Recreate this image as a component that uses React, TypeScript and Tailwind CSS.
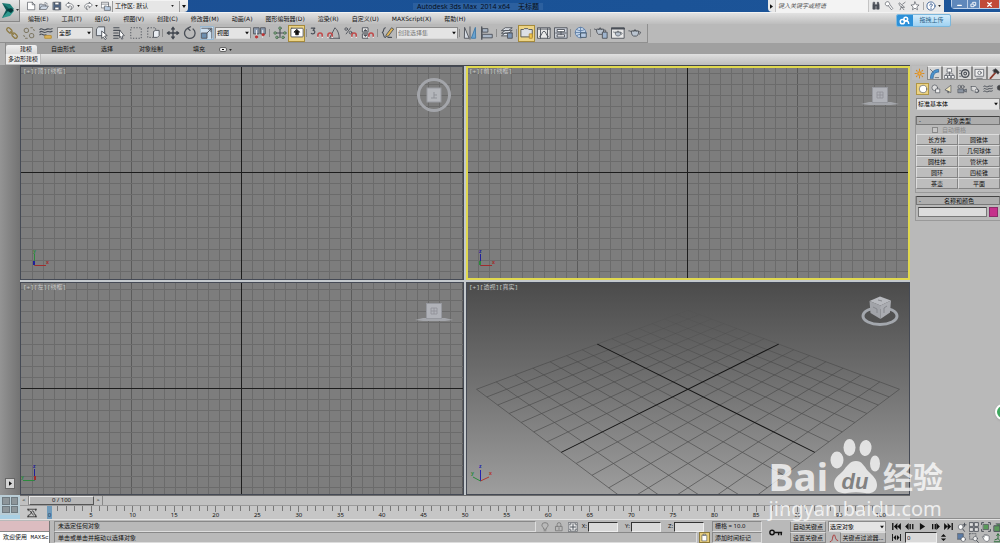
import type { ReactNode } from 'react';
import { useState } from 'react';

const MENUS = [
  '编辑(E)',
  '工具(T)',
  '组(G)',
  '视图(V)',
  '创建(C)',
  '修改器(M)',
  '动画(A)',
  '图形编辑器(D)',
  '渲染(R)',
  '自定义(U)',
  'MAXScript(X)',
  '帮助(H)',
];

const OBJECT_TYPES = ['长方体', '圆锥体', '球体', '几何球体', '圆柱体', '管状体', '圆环', '四棱锥', '茶壶', '平面'];

const FRAMES = Array.from({ length: 101 }, (_, i) => i);

/* ---------- small shared pieces ---------- */

interface GlyphProps {
  children: ReactNode;
  className?: string;
}

function Glyph({ children, className = 'h-[14px] w-[14px]' }: GlyphProps) {
  return (
    <svg
      viewBox="0 0 16 16"
      className={`block shrink-0 ${className}`}
      fill="none"
      stroke="#4a4f57"
      strokeWidth={1}
      strokeLinecap="round"
      strokeLinejoin="round"
    >
      {children}
    </svg>
  );
}

interface ToolProps {
  label: string;
  children: ReactNode;
  active?: boolean;
}

function Tool({ label, children, active = false }: ToolProps) {
  return (
    <button
      type="button"
      aria-label={label}
      className={`flex h-[17px] w-[17px] shrink-0 items-center justify-center ${
        active ? 'border border-[#a58a3c] bg-[#ecd384]' : ''
      }`}
    >
      <Glyph>{children}</Glyph>
    </button>
  );
}

function Divider() {
  return (
    <span className="flex w-[3px] shrink-0 justify-center">
      <span className="h-2 w-px bg-[#8c8c8c]" />
    </span>
  );
}

interface DropProps {
  label: string;
  value: string;
  className: string;
  muted?: boolean;
}

function Drop({ label, value, className, muted = false }: DropProps) {
  return (
    <span className={`relative block shrink-0 ${className}`}>
      <select
        aria-label={label}
        className={`block h-full w-full appearance-none truncate border border-[#8a8a8a] border-b-[#d8d8d8] bg-[#e4e4e4] pl-px text-[6px] leading-none ${
          muted ? 'text-[#777]' : 'text-black'
        }`}
      >
        <option>{value}</option>
      </select>
      <svg viewBox="0 0 4 3" className="pointer-events-none absolute top-1/2 right-[2px] h-[3px] w-1 -translate-y-1/2">
        <path d="M0 0h4L2 3z" fill="#111" />
      </svg>
    </span>
  );
}

function Magnet({ x = 7, y = 8 }: { x?: number; y?: number }) {
  return (
    <g transform={`translate(${x} ${y})`}>
      <path d="M1 6V3.500a2.500 2.500 0 0 1 5 0V6" stroke="#c04a4a" strokeWidth="1.800" strokeLinecap="butt" />
      <path d="M.2 6h1.600M5.200 6h1.600" stroke="#eee" strokeWidth="1.400" strokeLinecap="butt" />
    </g>
  );
}

function Teapot() {
  return (
    <>
      <path d="M4 7c-.5 2 .5 4.500 2 5.500h4c1.500-1 2.500-3.500 2-5.500z" fill="#b9c3cf" />
      <path d="M4 8C2.500 6.500 2 6.500 1 6.500M12 8c2.500-1.500 3.500.5 1 2.500M6 7c.5-1.500 3.500-1.500 4 0M8 5v.6" />
    </>
  );
}

/* ---------- title bar ---------- */

function AppLogo() {
  return (
    <svg viewBox="0 0 20 22" className="h-[22px] w-5">
      <path d="M2 3l8 1 4 5-5 1z" fill="#1f7f78" />
      <path d="M2 3l4 7-4 8 6-3 3-5z" fill="#0e5a58" />
      <path d="M2 18l8-2 4-5-5-1z" fill="#2f9a8f" />
      <path d="M6 10l5-2 3 2-3 3z" fill="#06393b" />
      <path d="M16 9h3l-1.500 2z" fill="#333" />
    </svg>
  );
}

function TitleBar() {
  return (
    <header className="flex h-3 shrink-0 bg-linear-to-r from-[#1c4f94] via-[#1a5296] to-[#1d5599]">
      <div className="flex shrink-0 items-center rounded-br-sm bg-linear-to-b from-[#f4f4f4] to-[#dcdcdc] pl-6">
        <QuickButton label="新建">
          <path d="M3 2h7l4 4v8H3zM10 2v4h4" fill="#fff" />
        </QuickButton>
        <QuickButton label="打开">
          <path d="M1 13V5h4l1 1h5v2M1 13l3-5h11l-3 5zM9 3c2-1 4 0 4 2" fill="#cfd9e6" />
        </QuickButton>
        <QuickButton label="保存">
          <path d="M2 2h12v12H2z" fill="#516786" />
          <path d="M5 2h6v4H5zM5 10h6v4H5z" fill="#fff" />
        </QuickButton>
        <QuickButton label="撤消">
          <path d="M6 2L1 6.500 6 11V8c5-1 6 1 3 6 7-4 5-10-3-10z" fill="#fff" />
        </QuickButton>
        <Caret />
        <QuickButton label="重做">
          <path d="M10 2l5 4.500-5 4.500V8C5 7 4 9 7 14 0 10 2 4 10 4z" fill="#fff" />
        </QuickButton>
        <Caret />
        <QuickButton label="项目文件夹">
          <path d="M1 2h11v9H1zM1 5h11" fill="#fff" />
          <path d="M6 8h3l1 1h5v6H6z" fill="#b9cbe0" />
        </QuickButton>
        <button
          type="button"
          className="flex h-[11px] w-[68px] items-center justify-between border-x border-[#9b9b9b] bg-[#e6e6e6] pr-1 pl-[2px] text-[6px] leading-none"
        >
          <span>工作区: 默认</span>
          <Caret />
        </button>
        <button type="button" aria-label="自定义快速访问工具栏" className="flex h-full w-2 items-center justify-center">
          <svg viewBox="0 0 4 3" className="h-[3px] w-1">
            <path d="M0 0h4L2 3z" fill="#111" />
          </svg>
        </button>
      </div>

      <h1 className="flex flex-1 items-center justify-center font-['Open_Sans','Noto_Sans_CJK_SC',sans-serif] text-[7px] leading-none whitespace-nowrap text-[#050b16]">
        <span className="flex gap-2 bg-[#3d6ea8]/50 px-1">
          <span>Autodesk 3ds Max&nbsp; 2014 x64</span>
          <span>无标题</span>
        </span>
      </h1>

      <div className="flex w-[176px] shrink-0 items-center rounded-bl-sm bg-[#e9e9e9]">
        <svg viewBox="0 0 4 6" className="mx-[2px] h-[5px] w-[3px]">
          <path d="M0 0v6l4-3z" fill="#111" />
        </svg>
        <input
          type="text"
          aria-label="搜索"
          placeholder="键入关键字或短语"
          className="h-full w-[94px] border-x border-[#c4c4c4] bg-[#f3f3f3] pl-[2px] text-[6px] leading-none italic placeholder:text-[#555]"
        />
        <QuickButton label="查找">
          <path d="M3 6v7h4V8h2v5h4V6l-1-4h-2v4H6V2H4z" fill="#4a4f57" />
        </QuickButton>
        <QuickButton label="密钥">
          <path d="M8 7a3.500 3.500 0 1 1 1-2L14 12l-2 2-5-6.500" fill="#fff" />
        </QuickButton>
        <QuickButton label="通讯中心">
          <path d="M3 4c2 6 5 7 9 6M4 3l7 6M9 5l4-3M5 14l2-5 4 5" />
        </QuickButton>
        <QuickButton label="收藏夹">
          <path d="M8 1.500l2 4.500 4.500.4L11 9.500l1 4.500-4-2.500L4 14l1-4.500L1.500 6.400 6 6z" fill="#fff" />
        </QuickButton>
        <span className="ml-[2px] h-2 w-px bg-[#aaa]" />
        <QuickButton label="帮助">
          <circle cx="8" cy="8" r="6.500" fill="#fff" stroke="#3a5f94" strokeWidth="1.400" />
          <path d="M6 6.500C6 4 10 4 10 6.500c0 1.500-2 1.500-2 3M8 11.500v.3" stroke="#234a86" strokeWidth="1.600" />
        </QuickButton>
        <Caret />
      </div>

      <div className="flex w-14 shrink-0 items-start justify-end">
        <div className="flex h-[9px] w-[49px] rounded-bl-sm border border-t-0 border-[#bcd0e8] text-white">
          <WindowButton label="最小化" className="w-[15px] bg-[#5f88bb]">
            <path d="M4 10h8" stroke="#fff" strokeWidth="3" />
          </WindowButton>
          <WindowButton label="还原" className="w-[13px] border-x border-[#bcd0e8] bg-[#5f88bb]">
            <path d="M3 7h6v6H3zM6 5V3h7v7h-3" stroke="#fff" strokeWidth="2" />
          </WindowButton>
          <WindowButton label="关闭" className="flex-1 bg-[#c14a38]">
            <path d="M4 4l8 8M12 4l-8 8" stroke="#fff" strokeWidth="3" />
          </WindowButton>
        </div>
      </div>
    </header>
  );
}

function QuickButton({ label, children }: { label: string; children: ReactNode }) {
  return (
    <button type="button" aria-label={label} className="flex h-full w-[13px] items-center justify-center">
      <Glyph className="h-[10px] w-[10px]">{children}</Glyph>
    </button>
  );
}

function WindowButton({ label, className, children }: { label: string; className: string; children: ReactNode }) {
  return (
    <button type="button" aria-label={label} className={`flex items-center justify-center ${className}`}>
      <Glyph className="h-[7px] w-[7px]">{children}</Glyph>
    </button>
  );
}

function Caret() {
  return (
    <svg viewBox="0 0 4 3" className="mx-px h-[2px] w-[3px] shrink-0">
      <path d="M0 0h4L2 3z" fill="#222" />
    </svg>
  );
}

/* ---------- menu, toolbar, ribbon ---------- */

function MenuBar() {
  return (
    <nav className="flex h-3 shrink-0 items-center gap-[13px] border-t border-[#f2f2f2] bg-linear-to-b from-[#e2e2e2] to-[#bdbdbd] pl-7 font-['DejaVu_Sans','Noto_Sans_CJK_SC',sans-serif]">
      {MENUS.map((m) => (
        <button key={m} type="button" className="whitespace-nowrap">
          {m}
        </button>
      ))}
    </nav>
  );
}

function Toolbar() {
  return (
    <div className="flex h-[19px] shrink-0 bg-[#b9b9b9]">
      <div className="flex items-center border-r border-b border-[#8f8f8f] pr-1 pl-[3px]">
        <Tool label="选择并链接">
          <g stroke="#8e7b45" strokeWidth="1.500">
            <rect x="1.500" y="3" width="7" height="4" rx="2" transform="rotate(45 5 5)" />
            <rect x="7.500" y="9" width="7" height="4" rx="2" transform="rotate(45 11 11)" />
            <path d="M6.500 6.500l3 3" />
          </g>
        </Tool>
        <Tool label="断开当前选择链接">
          <g stroke="#7d7763" strokeWidth="1.200">
            <path d="M10 2h2M13 4l1 1M2 11l1 1M4 14h2" />
            <circle cx="5" cy="5" r="2.500" strokeDasharray="2 1" />
            <circle cx="11" cy="11" r="2.500" strokeDasharray="2 1" />
          </g>
        </Tool>
        <Tool label="绑定到空间扭曲">
          <path d="M1 4c2-3 4 2 7 0s4 1 7-1M1 7c2-3 4 2 7 0s4 1 7-1M1 10c2-3 4 2 7 0" strokeWidth="1.300" />
          <path d="M7 11h7v3H7z" fill="#dfb75a" stroke="#b38a31" />
        </Tool>
        <Drop label="选择过滤器" value="全部" className="ml-[3px] h-3 w-9" />
        <Tool label="选择对象">
          <path d="M2 3l2-2h7v8l-2 2H2z" fill="#dfe5ec" />
          <path d="M8 6l6 5-3 .5 2 3-1.500 1-2-3L8 14z" fill="#fff" />
        </Tool>
        <Tool label="按名称选择">
          <path d="M2 2h6M2 5h7M2 8h5M2 11h6M2 14h5" strokeWidth="1.400" />
          <path d="M9 5l5 6-2.500.5 1 3-1.500.5-1-3-1 1z" fill="#fff" />
        </Tool>
        <Tool label="矩形选择区域">
          <path d="M2 2h12v12H2z" strokeDasharray="1.500 1.700" strokeLinecap="butt" />
        </Tool>
        <Tool label="窗口/交叉">
          <path d="M2 2h9v11H2z" strokeDasharray="1.500 1.700" strokeLinecap="butt" />
          <path d="M9 6l2-1h4v6l-2 2H9z" fill="#e9edf2" />
        </Tool>
        <Divider />
        <Tool label="选择并移动">
          <g strokeWidth="1.500" stroke="#3f444c">
            <path d="M8 2v12M2 8h12M6.500 3.500L8 1.500l1.500 2M6.500 12.500l1.500 2 1.500-2M3.500 6.500L1.500 8l2 1.500M12.500 6.500l2 1.500-2 1.500" />
          </g>
        </Tool>
        <Tool label="选择并旋转">
          <path d="M11.500 3.500A6 6 0 1 1 6 2.500M8.500.8L5.500 2.500l2.500 2.500" strokeWidth="1.500" />
        </Tool>
        <Tool label="选择并均匀缩放">
          <path d="M.5.5h15v15H.5z" fill="#cfe0ef" stroke="#8fb2cf" />
          <path d="M2 8h6v6H2z" fill="#6c8fb0" />
          <path d="M2 2.500h11.500V14M8 8l4.500-4.500M9.500 3.500h3v3" />
        </Tool>
        <Drop label="参考坐标系" value="视图" className="h-3 w-9" />
        <Tool label="使用轴点中心">
          <path d="M1 2h6v7H1zM9 2h5v7H9z" fill="#8d9cb0" />
          <path d="M4 5v8M11 5v8" stroke="#eee" />
          <circle cx="4" cy="12.500" r="1.300" fill="#b33" stroke="#b33" />
          <circle cx="11.500" cy="10" r="1.300" fill="#b33" stroke="#b33" />
        </Tool>
        <Divider />
        <Tool label="选择并操纵">
          <path d="M8 3v10M3 8h10" strokeWidth="1.300" />
          <g fill="#83ad83" stroke="#54705a">
            <circle cx="8" cy="2.500" r="1.500" />
            <circle cx="2.500" cy="8" r="1.500" />
            <circle cx="13.500" cy="8" r="1.500" />
            <circle cx="4.500" cy="13" r="1.500" />
            <circle cx="11.500" cy="13" r="1.500" />
          </g>
        </Tool>
        <Tool label="键盘快捷键覆盖切换" active>
          <rect x="1" y="2.500" width="14" height="10" rx="1" fill="#fff" />
          <path d="M8 4l3 3H9.500v3h-3V7H5z" fill="#111" stroke="#111" />
        </Tool>
        <Divider />
        <Tool label="捕捉开关">
          <path d="M1.500 2.500h4L3.500 5c3 0 2.500 4-.5 4-1 0-1.500-.5-1.500-.5" strokeWidth="1.300" />
          <Magnet x={8} y={7} />
        </Tool>
        <Tool label="角度捕捉切换">
          <path d="M14 14H3L9 2c3 2 5 7 5 12z" />
          <Magnet x={0} y={7} />
        </Tool>
        <Tool label="百分比捕捉切换">
          <circle cx="2.500" cy="3.500" r="1.500" />
          <circle cx="7.500" cy="7.500" r="1.500" />
          <path d="M7.500 2L2.500 9" />
          <Magnet x={8} y={7} />
        </Tool>
        <Tool label="微调器捕捉切换">
          <path d="M2 2h6v5H2zM2 9h6v5H2z" fill="#e6e6e6" />
          <path d="M3.500 5.500L5 4l1.500 1.500zM3.500 10.500L5 12l1.500-1.500z" fill="#222" />
          <Magnet x={8} y={7} />
        </Tool>
        <Divider />
        <Tool label="编辑命名选择集">
          <path d="M5 2C2 2 4 6 1.500 7.500 4 9 2 13 5 13M8 13h4" strokeWidth="1.300" />
          <path d="M6 10l6-8 2.500 1.500-6 8L6 12z" fill="#e0b554" />
        </Tool>
        <Drop label="命名选择集" value="创建选择集" className="h-3 w-[62px]" muted />
        <Divider />
        <Tool label="镜像">
          <path d="M2 2l5 12H2zM8 1v14" fill="#d5dbe3" />
          <path d="M14 2L9.500 14H14z" fill="#6aa3d0" stroke="#3a77a8" />
        </Tool>
        <Tool label="对齐">
          <path d="M2 1v14" strokeWidth="1.500" />
          <path d="M3 3h6v4H3zM3 9.500h11v4H3z" fill="#a9b6c6" />
        </Tool>
        <Divider />
        <Tool label="层管理器">
          <path d="M2 5l4-3h8l-4 3zM2 8l4-3h8l-4 3zM2 11l4-3h8l-4 3z" fill="#e6eaf0" />
          <path d="M9 8h5v6H9z" fill="#7c95b5" />
        </Tool>
        <Divider />
        <Tool label="切换功能区" active>
          <path d="M1 12V4h3l1-1h4l1 1h4v8z" fill="#dcdfe4" />
          <path d="M11 9h3v5h-3z" fill="#f0c64c" stroke="#b38a31" />
        </Tool>
        <Tool label="曲线编辑器">
          <path d="M1 2h14v12H1z" fill="#e8e8e8" />
          <path d="M1 3.500h14M4 3v11M12 3v11" />
          <path d="M3 12C6 12 5 6 8 6s2 6 5 6" />
        </Tool>
        <Tool label="图解视图">
          <path d="M1 2h14v12H1z" fill="#c9ced6" />
          <path d="M4 4h8v2.500H4zM4 10h8v2.500H4zM8 6.500V10M2 8h12" fill="#fff" />
        </Tool>
        <Divider />
        <Tool label="材质编辑器">
          <circle cx="7.500" cy="7.500" r="6" fill="#c3d5ea" stroke="#5a7ba6" />
          <path d="M1.500 7.500h12M7.500 1.500v12M3 4c3 2 6 2 9 0M3 11c3-2 6-2 9 0" stroke="#5a7ba6" />
          <path d="M8 8h6v5H8z" fill="#b5c9e2" stroke="#456" />
        </Tool>
        <Divider />
        <Tool label="渲染设置">
          <g transform="translate(-1 -3)">
            <Teapot />
          </g>
          <path d="M10 7h5v7h-5z" fill="#9fb5cf" />
        </Tool>
        <Tool label="渲染帧窗口">
          <path d="M1 2h14v12H1z" fill="#e8e8e8" />
          <path d="M1 3h14" strokeWidth="2" />
          <g transform="translate(2 2) scale(.75)">
            <Teapot />
          </g>
        </Tool>
        <Tool label="渲染产品">
          <g transform="translate(0 -1)">
            <Teapot />
          </g>
        </Tool>
      </div>
    </div>
  );
}

function Ribbon() {
  return (
    <>
      <div className="flex h-[11px] shrink-0 bg-[#a0a0a0]">
        <div className="w-[6px] border-r border-[#8b8b8b] bg-[#b4b4b4]" />
        <div role="tablist" className="flex items-end gap-[14px]">
          <button
            type="button"
            role="tab"
            aria-selected="true"
            className="h-[9px] w-[31px] rounded-t-xs bg-linear-to-b from-[#f1f1f1] to-[#d8d8d8] pl-[9px] text-center"
          >
            建模
          </button>
          <button type="button" role="tab" aria-selected="false" className="mr-3 h-[9px]">
            自由形式
          </button>
          <button type="button" role="tab" aria-selected="false" className="mr-3 h-[9px]">
            选择
          </button>
          <button type="button" role="tab" aria-selected="false" className="mr-4 h-[9px]">
            对象绘制
          </button>
          <button type="button" role="tab" aria-selected="false" className="h-[9px]">
            填充
          </button>
          <button type="button" aria-label="最小化功能区" className="flex h-[9px] items-center gap-px">
            <span className="flex h-[5px] w-2 items-center justify-center rounded-xs border border-[#666] bg-[#eee]">
              <span className="h-px w-[2px] bg-black" />
            </span>
            <Caret />
          </button>
        </div>
      </div>
      <div className="flex h-[11px] shrink-0 bg-linear-to-b from-[#e0e0e0] to-[#bcbcbc]">
        <div className="w-[6px] border-r border-[#9a9a9a] bg-[#b4b4b4]" />
        <button type="button" className="h-[10px] border-r border-[#bbb] bg-[#ececec] px-[2px]">
          多边形建模
        </button>
      </div>
    </>
  );
}

/* ---------- viewports ---------- */

function OrthoGrid() {
  // 11 units per cell, every tenth line is darker
  const cols = Array.from({ length: 51 }, (_, i) => i - 25);
  const rows = Array.from({ length: 31 }, (_, i) => i - 15);
  return (
    <svg
      viewBox="-221 -106 444 213"
      preserveAspectRatio="xMidYMid slice"
      className="absolute inset-0 h-full w-full"
      shapeRendering="crispEdges"
    >
      {cols.map((c) => (
        <path key={c} d={`M${c * 11 + 0.5} -170V170`} stroke={c % 10 === 0 ? '#5b5b5b' : '#6b6b6b'} />
      ))}
      {rows.map((r) => (
        <path key={r} d={`M-280 ${r * 11 + 0.5}H280`} stroke={r % 10 === 0 ? '#5b5b5b' : '#6b6b6b'} />
      ))}
      <path d="M.5 -170V170M-280 .5H280" stroke="#1d1d1d" />
    </svg>
  );
}

// projects a ground plane point (u, v in -1..1) on to the view
function project(u: number, v: number) {
  const b = u + v;
  const w = 1 + 0.166 * b;
  const x = 222 + (105.5 * (u - v)) / w;
  const y = 107 - (52.5 * b) / w;
  return `${x.toFixed(2)} ${y.toFixed(2)}`;
}

function PerspectiveGrid() {
  const steps = Array.from({ length: 15 }, (_, i) => (i - 7) / 7).filter((s) => s !== 0);
  return (
    <svg viewBox="0 0 444 213" preserveAspectRatio="xMidYMid slice" className="absolute inset-0 h-full w-full">
      <defs>
        <linearGradient id="fade" gradientUnits="userSpaceOnUse" x1="0" y1="26" x2="0" y2="212">
          <stop offset="0" stopColor="#4e4e4e" stopOpacity="0.2" />
          <stop offset="0.3" stopColor="#484848" stopOpacity="0.8" />
          <stop offset="1" stopColor="#565656" />
        </linearGradient>
      </defs>
      <g stroke="url(#fade)" strokeWidth="0.8">
        {steps.map((s) => (
          <path key={s} d={`M${project(s, -1)}L${project(s, 1)}M${project(-1, s)}L${project(1, s)}`} />
        ))}
      </g>
      <path
        d={`M${project(0, -1)}L${project(0, 1)}M${project(-1, 0)}L${project(1, 0)}`}
        stroke="#161616"
        strokeWidth="1"
      />
    </svg>
  );
}

function CubeTop() {
  return (
    <svg viewBox="0 0 40 40" className="h-10 w-10">
      <circle cx="20" cy="20" r="15.500" fill="none" stroke="#a3a5aa" strokeWidth="3" />
      <rect x="13" y="13" width="14" height="14" fill="#b4b6bb" stroke="#999ba1" />
      <path d="M20 17v6M20 20h3M17 23h6" stroke="#8f9197" fill="none" />
    </svg>
  );
}

function CubeSide() {
  return (
    <svg viewBox="0 0 40 40" className="h-10 w-10">
      <path d="M1 29l8-2h22l8 2-8 1H9z" fill="#a3a5aa" />
      <rect x="12.500" y="12.500" width="15" height="15" fill="#b0b2b8" stroke="#96989e" />
      <path d="M17 17h6v6h-6zM17 20h6M20 17v6" stroke="#8f9197" fill="none" strokeWidth=".8" />
    </svg>
  );
}

function CubePerspective() {
  return (
    <svg viewBox="0 0 40 40" className="h-10 w-10">
      <ellipse cx="20" cy="25" rx="17" ry="8.500" fill="#4c4c4c" fillOpacity=".6" stroke="#a3a7ad" strokeWidth="3" />
      <path d="M20 5.500l11 4-10.500 5L9.500 10z" fill="#b7b9be" />
      <path d="M9.500 10l11 4.500V28L10.500 22z" fill="#a1a3a8" />
      <path d="M31 9.500l-10.500 5V28L30 21.500z" fill="#aaacb1" />
      <path d="M13 16l4 2v4M27 15l-3 2v5M18 9l4 1" stroke="#85878c" fill="none" />
    </svg>
  );
}

function AxisFlat({ up, upColor, out }: { up: string; upColor: string; out: string }) {
  return (
    <svg viewBox="0 0 20 22" className="h-[22px] w-5" fontSize="5" fontWeight="bold">
      <path d="M4.500 17.500V6" stroke={upColor} />
      <path d="M4.500 17.500H16" stroke="#a02c2c" />
      <text x="3" y="5" fill={upColor}>
        {up}
      </text>
      <text x="16" y="16" fill="#a02c2c">
        x
      </text>
      <rect x="3" y="13" width="2" height="4" fill={out} />
    </svg>
  );
}

function AxisLeft() {
  return (
    <svg viewBox="0 0 20 22" className="h-[22px] w-5" fontSize="5" fontWeight="bold">
      <path d="M13.500 17.500V6" stroke="#20209a" />
      <path d="M13.500 17.500H2" stroke="#2c8a3c" />
      <text x="12" y="5" fill="#20209a">
        z
      </text>
      <text x="0" y="16" fill="#2c8a3c">
        y
      </text>
      <rect x="13" y="13" width="2" height="4" fill="#a02c2c" />
    </svg>
  );
}

function AxisPerspective() {
  return (
    <svg viewBox="0 0 24 22" className="h-[22px] w-6" fontSize="5" fontWeight="bold">
      <path d="M10.500 18V7" stroke="#2323b0" />
      <path d="M10.500 18L19 14" stroke="#b03a30" />
      <path d="M10.500 18L3 14" stroke="#2c8a3c" />
      <text x="9" y="5" fill="#2323b0">
        z
      </text>
      <text x="19" y="12" fill="#b03a30">
        x
      </text>
      <text x="1" y="12" fill="#2c8a3c">
        y
      </text>
    </svg>
  );
}

interface ViewportProps {
  label: string;
  cube: ReactNode;
  axis: ReactNode;
  axisClass: string;
  children: ReactNode;
  active?: boolean;
  shaded?: boolean;
}

function Viewport({ label, cube, axis, axisClass, children, active = false, shaded = false }: ViewportProps) {
  return (
    <section
      className={`relative min-h-0 min-w-0 overflow-hidden ${
        shaded ? 'bg-linear-to-b from-[#4b4b4b] to-[#9e9e9e]' : 'bg-[#7d7d7d]'
      }`}
    >
      {children}
      <div
        className={`pointer-events-none absolute inset-0 ${
          active ? 'border-2 border-[#e0d84e]' : 'border border-[#454a55]'
        }`}
      />
      <div className="absolute top-[2px] left-[3px] font-['Liberation_Mono','Noto_Sans_CJK_SC',monospace] text-[6px] leading-[8px] text-[#c8c8c8]">
        {label}
      </div>
      <div className="absolute top-[9px] right-[10px]">{cube}</div>
      <div className={`absolute bottom-[10px] ${axisClass}`}>{axis}</div>
    </section>
  );
}

function Viewports() {
  return (
    <main className="grid min-h-0 flex-1 grid-cols-2 grid-rows-2 gap-[2px] border-t border-[#44484f] bg-[#c3c8cc]">
      <Viewport
        label="[+][顶][线框]"
        cube={<CubeTop />}
        axis={<AxisFlat up="y" upColor="#2c8a3c" out="#20209a" />}
        axisClass="left-[10px]"
      >
        <OrthoGrid />
      </Viewport>
      <Viewport
        label="[+][前][线框]"
        cube={<CubeSide />}
        axis={<AxisFlat up="z" upColor="#20209a" out="#2c8a3c" />}
        axisClass="left-[10px]"
        active
      >
        <OrthoGrid />
      </Viewport>
      <Viewport label="[+][左][线框]" cube={<CubeSide />} axis={<AxisLeft />} axisClass="left-px">
        <OrthoGrid />
      </Viewport>
      <Viewport
        label="[+][透视][真实]"
        cube={<CubePerspective />}
        axis={<AxisPerspective />}
        axisClass="left-1"
        shaded
      >
        <PerspectiveGrid />
      </Viewport>
    </main>
  );
}

/* ---------- time slider and track bar ---------- */

function TimeSlider() {
  return (
    <div className="flex h-[10px] shrink-0 items-center border-t border-[#6d6d6d] bg-[#c1c1c1]">
      <button type="button" aria-label="上一帧" className="h-full w-[9px] border-r border-[#888]">
        &lt;
      </button>
      <button
        type="button"
        className="h-full w-[65px] border border-t-[#e6e6e6] border-r-[#555] border-b-[#555] border-l-[#e6e6e6] bg-[#b7b7b7] leading-[7px]"
      >
        0 / 100
      </button>
      <button type="button" aria-label="下一帧" className="h-full w-[9px] border-r border-[#888]">
        &gt;
      </button>
    </div>
  );
}

function TrackBar() {
  return (
    <div className="flex h-[14px] shrink-0 items-start border-t border-[#9a9a9a] bg-[#c6c6c6]">
      <button type="button" aria-label="打开迷你曲线编辑器" className="ml-1 flex h-[13px] w-[15px] items-center justify-center">
        <Glyph className="h-3 w-3">
          <path d="M2 3h12M2 13h12M3 3v2M13 3v2M3 11v2M13 11v2M4 11c3 0 3-6 5-6s1 6 4 6M5 5l5 6" stroke="#222" />
        </Glyph>
      </button>
      <div className="mr-7 ml-[10px] flex flex-1 justify-between">
        {FRAMES.map((f) => (
          <div key={f} className="flex w-px flex-col items-center">
            <span
              className={`${f === 0 ? 'w-[5px] bg-[#6f9bbb]' : 'w-px bg-[#777]'} ${
                f % 5 === 0 ? 'h-[6px]' : 'h-[5px]'
              }`}
            />
            {f % 5 === 0 && (
              <span className={`leading-[7px] ${f === 0 ? 'bg-[#6f9bbb] px-px text-[#1d3c5c]' : ''}`}>{f}</span>
            )}
          </div>
        ))}
      </div>
    </div>
  );
}

/* ---------- command panel ---------- */

function PanelTab({ label, children, active = false }: ToolProps) {
  return (
    <button
      type="button"
      aria-label={label}
      className={`flex h-[14px] w-[15px] shrink-0 items-center justify-center ${
        active ? 'bg-[#bdbdbd]' : 'border border-[#888] border-t-[#efefef] bg-[#d6d6d6]'
      }`}
    >
      <Glyph className="h-[11px] w-[11px]">{children}</Glyph>
    </button>
  );
}

function CategoryButton({ label, children, active = false }: ToolProps) {
  return (
    <button
      type="button"
      aria-label={label}
      className={`flex h-3 w-[13px] shrink-0 items-center justify-center ${
        active ? 'border border-[#b09545] bg-[#ecd384]' : ''
      }`}
    >
      <Glyph className="h-[10px] w-[10px]">{children}</Glyph>
    </button>
  );
}

function RollupTitle({ children }: { children: ReactNode }) {
  return (
    <button
      type="button"
      className="flex h-[9px] w-full items-center border border-[#777] border-t-[#444] bg-[#adadad] px-[2px] leading-none"
    >
      <span>-</span>
      <span className="flex-1 text-center">{children}</span>
    </button>
  );
}

function CommandPanel() {
  const [autoGrid, setAutoGrid] = useState(false);
  const [name, setName] = useState('');

  return (
    <aside className="flex w-[90px] shrink-0 flex-col overflow-hidden border-b border-[#8d8d8d] bg-[#b9b9b9] pt-px">
      <div className="flex pl-[2px]">
        <PanelTab label="创建" active>
          <g stroke="#d98a1f" strokeWidth="1.500">
            <circle cx="8" cy="8" r="2.500" fill="#f4b64f" />
            <path d="M8 1.500v2M8 12.500v2M1.500 8h2M12.500 8h2M3.500 3.500l1 1M11.500 11.500l1 1M12.500 3.500l-1 1M4.500 11.500l-1 1" />
          </g>
        </PanelTab>
        <PanelTab label="修改">
          <path d="M2 15C2 7 7 2 14 2v4c-5 0-8 3-8 9z" fill="#4a93cd" stroke="#2b5f93" />
          <path d="M2 2l4 4M9 14h5" />
        </PanelTab>
        <PanelTab label="层次">
          <path d="M5 1h6v5H5zM1 11h4v4H1zM6 11h4v4H6zM11 11h4v4h-4zM8 6v5M3 11V8.500h10V11" fill="#fff" />
        </PanelTab>
        <PanelTab label="运动">
          <circle cx="9" cy="8" r="5.500" strokeWidth="2" />
          <circle cx="9" cy="8" r="2" strokeWidth="1.500" />
          <path d="M1 4h2M0 8h2M1 12h2" />
        </PanelTab>
        <PanelTab label="显示">
          <path d="M2 2h12v10H2zM4 15h8" fill="#eee" />
          <circle cx="8" cy="7" r="2.500" />
        </PanelTab>
        <PanelTab label="实用程序">
          <path d="M2 15L10 6" stroke="#8c3a2c" strokeWidth="2.500" />
          <path d="M6 3l4-2 5 5-2 3-3-3-2 1z" fill="#333" />
        </PanelTab>
      </div>

      <div className="mt-[3px] flex pl-[6px]">
        <CategoryButton label="几何体" active>
          <circle cx="8" cy="8" r="6" fill="#fff" />
        </CategoryButton>
        <CategoryButton label="图形">
          <circle cx="6" cy="6" r="4.500" fill="#ddd" />
          <path d="M8 8h6v6H8z" fill="#eee" />
        </CategoryButton>
        <CategoryButton label="灯光">
          <path d="M2 9l9-7v11z" fill="#f0e6bd" />
          <path d="M5 11l1 3h2l-1-2.500" />
        </CategoryButton>
        <CategoryButton label="摄影机">
          <path d="M2 8h9v6H2zM11 10l4-2v5l-4-2" fill="#8a93a0" />
          <circle cx="4" cy="4.500" r="2.500" />
          <circle cx="9" cy="4.500" r="2.500" />
        </CategoryButton>
        <CategoryButton label="辅助对象">
          <path d="M2 4h7l4 6v3H8M2 4v6l3 1" fill="#ddd" />
          <circle cx="11" cy="11" r="3" />
        </CategoryButton>
        <CategoryButton label="空间扭曲">
          <path d="M1 4c2-3 4 2 7 0s4 1 7-1M1 8c2-3 4 2 7 0s4 1 7-1M1 12c2-3 4 2 7 0s4 1 7-1" strokeWidth="1.600" />
        </CategoryButton>
        <CategoryButton label="系统">
          <circle cx="6" cy="6" r="4" fill="#444" />
          <circle cx="11" cy="11" r="3" fill="#666" />
        </CategoryButton>
      </div>

      <div className="mt-[3px] pl-[6px]">
        <Drop label="对象类别" value="标准基本体" className="h-3 w-full" />
      </div>

      <section className="mt-[6px] ml-[5px] border-b border-l border-[#999] pb-[3px]">
        <RollupTitle>对象类型</RollupTitle>
        <label className="flex h-[9px] items-center gap-1 pl-4 leading-none text-[#8a8a8a]">
          <input
            type="checkbox"
            checked={autoGrid}
            onChange={(e) => setAutoGrid(e.target.checked)}
            className="h-[6px] w-[6px] appearance-none border border-[#888] bg-[#c5c5c5] checked:bg-[#555]"
          />
          自动栅格
        </label>
        <div className="grid grid-cols-2">
          {OBJECT_TYPES.map((type) => (
            <button
              key={type}
              type="button"
              className="h-[11px] border border-t-[#dcdcdc] border-r-[#848484] border-b-[#848484] border-l-[#dcdcdc] bg-[#bdbdbd] leading-none"
            >
              {type}
            </button>
          ))}
        </div>
      </section>

      <section className="mt-[3px] ml-[5px] border-b border-l border-[#999] pb-[3px]">
        <RollupTitle>名称和颜色</RollupTitle>
        <div className="mt-[2px] flex items-center gap-[2px] px-[2px]">
          <input
            type="text"
            aria-label="名称"
            value={name}
            onChange={(e) => setName(e.target.value)}
            className="h-[10px] min-w-0 flex-1 border border-[#777] border-t-[#444] bg-[#dcdcdc] px-px"
          />
          <button type="button" aria-label="颜色" className="h-[10px] w-[9px] border border-[#8c2a68] bg-[#c5308b]" />
        </div>
      </section>
    </aside>
  );
}

/* ---------- status bar ---------- */

function Coord({ axis }: { axis: string }) {
  return (
    <label className="flex items-center gap-px">
      {axis}:
      <input
        type="text"
        aria-label={axis}
        className="h-[10px] w-[30px] border border-t-[#333] border-r-[#eee] border-b-[#eee] border-l-[#333] bg-[#d9d9d9]"
      />
    </label>
  );
}

function NavButton({ label, children }: { label: string; children: ReactNode }) {
  return (
    <button type="button" aria-label={label} className="flex h-[11px] w-3 shrink-0 items-center justify-center">
      <Glyph className="h-[10px] w-[10px]">{children}</Glyph>
    </button>
  );
}

function PlayButton({ label, d }: { label: string; d: string }) {
  return (
    <button type="button" aria-label={label} className="flex h-[11px] w-[13px] shrink-0 items-center justify-center">
      <svg viewBox="0 0 10 8" className="h-[7px] w-[9px]">
        <path d={d} fill="#111" />
      </svg>
    </button>
  );
}

function StatusBar() {
  return (
    <footer className="flex h-6 shrink-0 border-t border-[#e2e2e2] bg-[#b9b9b9] pt-px">
      <div className="w-[50px] shrink-0 overflow-hidden border-r border-[#777]">
        <div className="h-[11px] border-b border-[#888] bg-[#dcbcc0]" />
        <div className="h-[11px] bg-white pl-[3px] font-['Liberation_Mono','Noto_Sans_CJK_SC',monospace] leading-[11px] whitespace-nowrap">
          欢迎使用 MAXSc
        </div>
      </div>

      <div className="ml-1 min-w-0 flex-1">
        <div className="flex h-[11px] items-center gap-1">
          <p className="h-[11px] min-w-0 flex-1 truncate border border-t-[#888] border-r-[#ddd] border-b-[#ddd] border-l-[#888] pl-[3px] leading-[9px]">
            未选定任何对象
          </p>
          <Glyph className="h-[10px] w-[10px]">
            <path d="M6 11C6 8 3 8 3 5a5 4 0 0 1 10 0c0 3-3 3-3 6zM6.500 14h3" stroke="#777" strokeWidth="1.300" />
          </Glyph>
          <Glyph className="h-[10px] w-[10px]">
            <path d="M3 7h10v7H3zM5 7V4a3 3 0 0 1 6 0v3M8 9v3" stroke="#777" strokeWidth="1.300" />
          </Glyph>
          <Glyph className="h-[10px] w-[10px]">
            <path d="M1 1h14v14H1z" fill="#eee" />
            <path d="M8 3v10M3 8h10M3 5V3h2M11 3h2v2M3 11v2h2M11 13h2v-2" strokeWidth="1.500" />
          </Glyph>
          <div className="flex gap-[7px]">
            <Coord axis="X" />
            <Coord axis="Y" />
            <Coord axis="Z" />
          </div>
          <p className="ml-1 h-[11px] w-[50px] border border-t-[#888] border-r-[#ddd] border-b-[#ddd] border-l-[#888] pl-[2px] leading-[9px]">
            栅格 = 10.0
          </p>
        </div>
        <div className="flex h-[11px] items-center">
          <p className="h-[11px] min-w-0 flex-1 truncate border border-t-[#888] border-r-[#ddd] border-b-[#ddd] border-l-[#888] pl-[3px] leading-[10px]">
            单击或单击并拖动以选择对象
          </p>
          <button
            type="button"
            aria-label="自适应降级"
            className="mx-[2px] flex h-[11px] w-[11px] items-center justify-center border border-[#8e7a3a] bg-[#e6cd7e]"
          >
            <Glyph className="h-[9px] w-[9px]">
              <path d="M4 4h8v10H4zM6 2h4v2H6z" fill="#fff" />
            </Glyph>
          </button>
          <button
            type="button"
            className="h-[11px] w-[50px] border border-t-[#888] border-r-[#ddd] border-b-[#ddd] border-l-[#888] pl-[2px] text-left leading-[10px]"
          >
            添加时间标记
          </button>
        </div>
      </div>

      <button type="button" aria-label="设置关键点" className="flex w-7 shrink-0 items-center justify-center">
        <svg viewBox="0 0 16 8" className="h-[7px] w-[14px]" fill="none" stroke="#111" strokeWidth="1.600">
          <circle cx="3.500" cy="4" r="2.500" />
          <path d="M6 4h9M11 4v3M14 4v3" />
        </svg>
      </button>

      <div className="grid w-24 shrink-0 grid-cols-[36px_58px] gap-x-[2px]">
        <button type="button" className="h-[11px] border border-[#888] border-t-[#ddd] leading-none whitespace-nowrap">
          自动关键点
        </button>
        <Drop label="选择集" value="选定对象" className="h-[11px] w-full" />
        <button type="button" className="h-[11px] border border-[#888] border-t-[#ddd] leading-none whitespace-nowrap">
          设置关键点
        </button>
        <div className="flex">
          <NavButton label="新建关键点的默认入/出切线">
            <path d="M2 14C7 14 5 3 8 3s1 9 6 9" stroke="#a33" strokeWidth="1.500" />
          </NavButton>
          <button
            type="button"
            className="h-[11px] flex-1 border border-[#888] border-t-[#ddd] leading-none whitespace-nowrap"
          >
            关键点过滤器...
          </button>
        </div>
      </div>

      <div className="ml-1 w-[66px] shrink-0">
        <div className="flex">
          <PlayButton label="转至开头" d="M0 0h1.500v8H0zM2 4l4-4v8zM6 4l4-4v8z" />
          <PlayButton label="上一帧" d="M0 4l4-4v8zM5 1h1.500v6H5zM8 1h1.500v6H8z" />
          <PlayButton label="播放动画" d="M2 0v8l6-4z" />
          <PlayButton label="下一帧" d="M10 4L6 0v8zM1 1h1.500v6H1zM4 1h1.500v6H4z" />
          <PlayButton label="转至结尾" d="M8.500 0H10v8H8.500zM8 4L4 0v8zM4 4L0 0v8z" />
        </div>
        <div className="flex">
          <PlayButton label="关键点模式切换" d="M0 0h1v8H0zM9 0h1v8H9zM1.500 4l3-3v6zM8.500 4l-3-3v6z" />
          <input
            type="text"
            aria-label="当前帧"
            defaultValue="0"
            className="ml-[2px] h-[11px] w-8 border border-t-[#333] border-r-[#eee] border-b-[#eee] border-l-[#333] bg-[#d9d9d9] pl-px leading-none"
          />
          <PlayButton label="微调" d="M5 0l3 3H2zM5 8l3-3H2z" />
        </div>
      </div>

      <div className="grid w-11 shrink-0 grid-cols-[12px_12px_12px_12px] overflow-hidden">
        <NavButton label="缩放">
          <circle cx="6" cy="8" r="4" fill="#fff" />
          <path d="M9 11l3 4M12 2v5M9.500 4.500h5" strokeWidth="1.500" />
        </NavButton>
        <NavButton label="缩放所有视图">
          <path d="M1 1h6v6H1zM9 1h6v6H9zM1 9h6v6H1zM9 9h6v6H9z" fill="#ddd" strokeWidth="1.400" />
        </NavButton>
        <NavButton label="最大化显示">
          <path d="M4 4h8v8H4z" fill="#5a9a5a" />
          <path d="M1 4V1h3M12 1h3v3M1 12v3h3M15 12v3h-3" strokeWidth="1.600" />
        </NavButton>
        <NavButton label="所有视图最大化显示">
          <path d="M2 6h9v9H2zM5 3h9v9" fill="#5a9a5a" strokeWidth="1.500" />
        </NavButton>
        <NavButton label="视野">
          <path d="M1 1h9v9H1z" fill="#5c7ba5" />
          <circle cx="10" cy="10" r="3.500" fill="#fff" />
        </NavButton>
        <NavButton label="缩放区域">
          <path d="M1 1h10v9H1z" strokeDasharray="2 2" />
          <circle cx="10" cy="9" r="3.500" fill="#eee" />
          <path d="M12 12l3 3" strokeWidth="1.500" />
        </NavButton>
        <NavButton label="平移视图">
          <path d="M4 9L2 6c1-1 2 0 3 1V3c1-1 2 0 2 1 0-3 2-3 2 0 1-2 2-1 2 1 1-1 2 0 2 1v4c0 4-6 5-8 1z" fill="#fff" />
        </NavButton>
        <NavButton label="环绕">
          <path d="M2 14h11L8 9V2M8 9l-5 2M6 4l2-3 2 3" stroke="#2f6f3c" strokeWidth="1.600" />
        </NavButton>
      </div>
    </footer>
  );
}

/* ---------- floating items ---------- */

function Watermark() {
  return (
    <div className="pointer-events-none absolute right-[57px] bottom-6 text-white opacity-75">
      <div className="flex items-end pb-1 font-['Noto_Sans','Noto_Sans_CJK_SC',sans-serif] leading-none font-bold">
        <span className="text-[38px] leading-[38px]">Bai</span>
        <svg viewBox="0 0 52 58" className="h-[58px] w-[52px]">
          <g fill="currentColor">
            <ellipse cx="9" cy="23" rx="6.500" ry="8.500" />
            <ellipse cx="21.500" cy="10.500" rx="6" ry="8.500" />
            <ellipse cx="37.500" cy="11" rx="6" ry="8" transform="rotate(8 37.500 11)" />
            <ellipse cx="47" cy="26.500" rx="5" ry="8" />
            <path d="M28 24c6 0 8 5 12 10 5 5 9 8 9 14 0 7-6 9-12 8-6-1-12-1-18 0-7 1-13-2-13-9 0-6 5-9 9-13 4-5 7-10 13-10z" />
          </g>
          <text
            x="27"
            y="52"
            textAnchor="middle"
            fontSize="22"
            fill="#7a7a7a"
            fontFamily="Liberation Sans, sans-serif"
            fontStyle="italic"
          >
            du
          </text>
        </svg>
        <span className="ml-[3px] text-[30px] leading-[36px]">经验</span>
      </div>
      <div className="font-['Noto_Sans',sans-serif] text-[20px] leading-[20px]">jingyan.baidu.com</div>
    </div>
  );
}

function UploadButton() {
  return (
    <button
      type="button"
      className="absolute top-[14px] right-[49px] flex h-[13px] w-[55px] overflow-hidden rounded-xs border border-[#7cb7dc] bg-linear-to-b from-[#d3ecfb] to-[#9fd2f2] text-[#2f6488]"
    >
      <span className="flex h-full w-4 items-center justify-center bg-[#2c90d8]">
        <svg viewBox="0 0 16 12" className="h-[9px] w-3" fill="none" stroke="#fff" strokeWidth="2">
          <circle cx="4.500" cy="7.500" r="2.800" />
          <circle cx="9" cy="4" r="2.500" />
          <path d="M7 7.500c2-2 6-1 6 3" />
        </svg>
      </span>
      <span className="flex-1 text-center leading-[11px]">拖拽上传</span>
    </button>
  );
}

export default function App() {
  return (
    <div className="relative flex h-screen flex-col overflow-hidden bg-[#b9b9b9] font-['Noto_Sans','Noto_Sans_CJK_SC',sans-serif] text-[6px] leading-[9px] text-[#111]">
      <TitleBar />
      <MenuBar />
      <Toolbar />
      <Ribbon />

      <div className="flex min-h-0 flex-1">
        <div className="flex w-5 shrink-0 flex-col items-center justify-end bg-linear-to-r from-[#949494] to-[#737373]">
          <button
            type="button"
            aria-label="展开视口布局选项卡"
            className="mb-[6px] flex h-[11px] w-[10px] items-center justify-center border border-[#666] bg-[#d4d4d4]"
          >
            <svg viewBox="0 0 4 6" className="h-[5px] w-[3px]">
              <path d="M0 0v6l4-3z" fill="#111" />
            </svg>
          </button>
          <button
            type="button"
            aria-label="视口布局"
            className="grid h-6 w-full grid-cols-2 gap-px border-b-4 border-[#a9cfe3] bg-[#b9cdd6] p-[2px]"
          >
            <span className="border border-[#6f7a80] bg-[#8d9599]" />
            <span className="border border-[#6f7a80] bg-[#8d9599]" />
            <span className="border border-[#6f7a80] bg-[#8d9599]" />
            <span className="border border-[#6f7a80] bg-[#8d9599]" />
          </button>
        </div>
        <div className="flex min-w-0 flex-1 flex-col">
          <Viewports />
          <TimeSlider />
          <TrackBar />
        </div>
        <CommandPanel />
      </div>

      <StatusBar />

      <button
        type="button"
        aria-label="应用程序"
        className="absolute top-0 left-0 h-[22px] w-5 border-r border-b border-[#888] bg-linear-to-b from-[#e4e4e4] to-[#b4b4b4]"
      >
        <AppLogo />
      </button>
      <UploadButton />
      <span className="absolute top-[404px] -right-[11px] h-4 w-4 rounded-full border-2 border-white bg-[#3fa860] shadow" />
      <Watermark />
    </div>
  );
}
